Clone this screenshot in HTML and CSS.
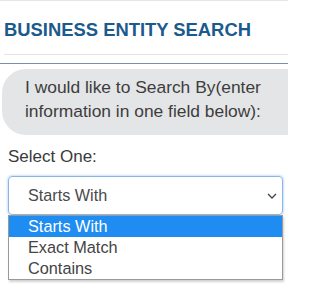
FILE: index.html
```html
<!DOCTYPE html>
<html lang="en">
<head>
<meta charset="utf-8">
<title>Business Entity Search</title>
<link rel="stylesheet" href="styles.css">
</head>
<body>
<div class="page">
  <header class="hdr">
    <h1 class="title">BUSINESS ENTITY SEARCH</h1>
  </header>
  <div class="rule"></div>
  <div class="bubble">I would like to Search By(enter information in one field below):</div>
  <div class="form">
    <label class="label">Select One:</label>
    <div class="selwrap">
      <div class="select">
        <span>Starts With</span>
        <svg class="chev" width="10" height="6" viewBox="0 0 10 6"><path d="M1 1 L5 5 L9 1" fill="none" stroke="#444" stroke-width="1.3"/></svg>
      </div>
      <ul class="list">
        <li class="opt sel">Starts With</li>
        <li class="opt">Exact Match</li>
        <li class="opt">Contains</li>
      </ul>
    </div>
    <div class="field"></div>
  </div>
</div>
</body>
</html>
```
FILE: styles.css
```css
html, body {
  margin: 0;
  padding: 0;
  background: #fff;
  overflow: hidden;
}
.page {
  font-family: "Liberation Sans", Arial, sans-serif;
  border-top: 1px solid #e6e6e6;
  width: 288px;
  height: 287px;
  overflow: hidden;
}
.hdr {
  margin-left: 4px;
  padding-bottom: 13px;
  border-bottom: 1px solid #e4e4e4;
}
.title {
  margin: 18px 0 0 0;
  font-size: 18.4px;
  line-height: 22px;
  font-weight: bold;
  color: #1b5a8c;
}
.rule {
  margin-top: 8px;
  height: 1px;
  background: #7a91a8;
}
.bubble {
  margin: 5px -40px 0 2px;
  padding: 7px 60px 12px 23px;
  background: #e4e5e7;
  border-radius: 24px 0 0 24px;
  font-size: 17.4px;
  line-height: 23.5px;
  color: #3d3d3d;
}
.form {
  padding: 0 5px 0 8px;
}
.label {
  display: block;
  margin-top: 10px;
  font-size: 17px;
  line-height: 23px;
  color: #3a3a3a;
}
.selwrap {
  position: relative;
  margin-top: 8px;
}
.select {
  height: 37px;
  border: 1px solid #86b7e8;
  border-radius: 4px;
  box-shadow: 0 0 2px 1px rgba(120, 170, 230, 0.35);
  display: flex;
  align-items: center;
  justify-content: space-between;
  padding: 0 5px 0 19px;
  font-size: 16.2px;
  color: #4a4a4a;
}
.chev {
  display: block;
}
.list {
  position: absolute;
  left: 0;
  right: 0;
  top: 39px;
  margin: 0;
  padding: 0;
  list-style: none;
  background: #fff;
  border: 1px solid #9a9a9a;
  box-shadow: 1px 2px 2px rgba(0, 0, 0, 0.18);
  z-index: 2;
}
.opt {
  height: 21px;
  line-height: 21px;
  padding-left: 19px;
  font-size: 16.3px;
  color: #444;
}
.opt.sel {
  background: #1e8cf0;
  color: #fff;
}
.field {
  margin-top: 12px;
  height: 40px;
  border: 1px solid #cfcfcf;
  border-radius: 4px;
}
```
